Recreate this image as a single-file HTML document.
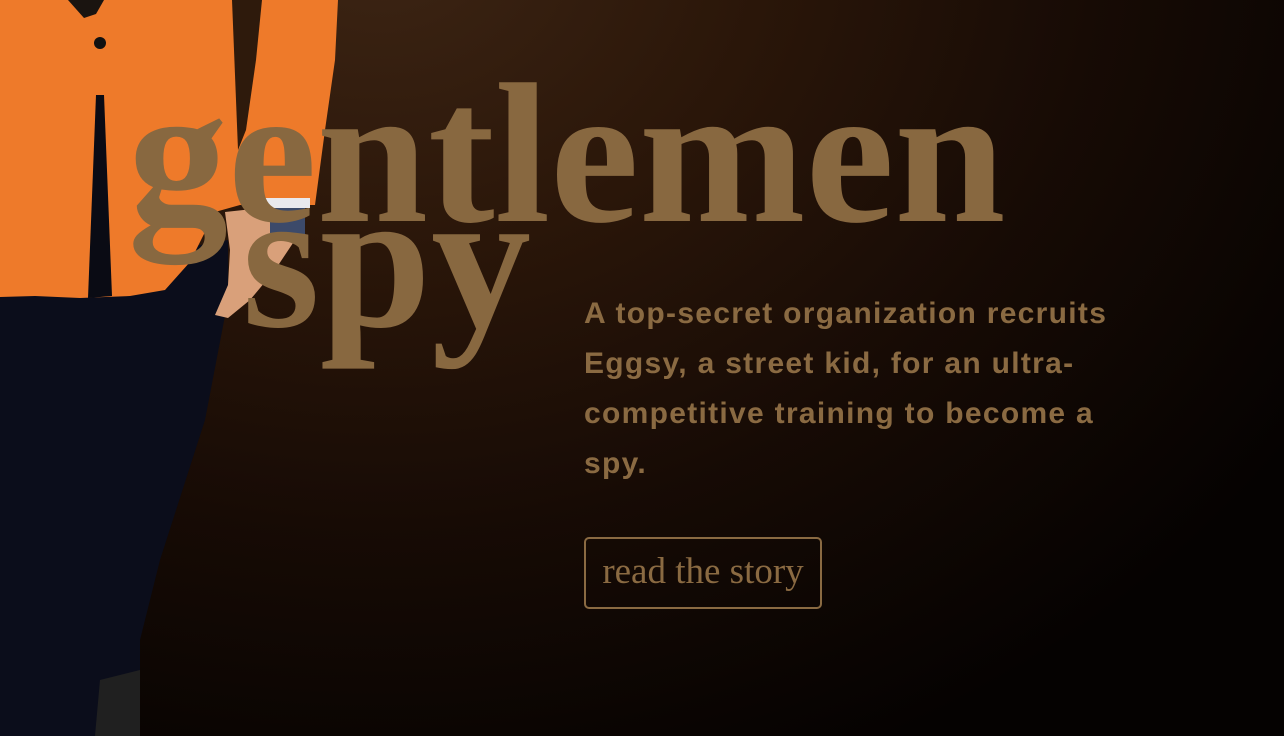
<!DOCTYPE html>
<html><head><style>
html,body{margin:0;padding:0;width:1284px;height:736px;overflow:hidden}
body{background:radial-gradient(ellipse 1100px 900px at 380px -60px,#3d2514 0%,#2a1609 35%,#170b05 65%,#050201 100%);position:relative;font-family:"Liberation Sans",sans-serif}
.h{position:absolute;font-family:"Liberation Serif",serif;font-weight:bold;color:#886840;font-size:200px;letter-spacing:0px;line-height:1;white-space:nowrap}
.p{position:absolute;left:584px;top:289px;width:560px;font-size:30px;font-weight:bold;line-height:50px;color:#8a6a42;letter-spacing:1.3px}
.b{position:absolute;left:584px;top:537px;width:234px;height:68px;border:2px solid #8a6a42;border-radius:5px;color:#8a6a42;font-family:"Liberation Serif",serif;font-size:37px;line-height:66px;text-align:center}
</style></head><body>
<svg width="345" height="736" style="position:absolute;left:0;top:0">
<polygon points="0,280 228,240 228,300 205,420 160,560 140,640 140,736 0,736" fill="#0b0d1b"/>
<path d="M0,0 L338,0 L335,60 L325,130 L315,205 L255,205 L240,205 L215,212 L190,262 L165,290 L130,296 L80,298 L35,296 L0,297 Z" fill="#ee7a2a"/>
<path d="M96,95 L104,95 L112,296 L88,298 Z" fill="#0a0b14"/>
<path d="M232,0 L262,0 L256,60 L246,130 L238,150 Z" fill="#2e1a0c"/>
<polygon points="68,0 104,0 96,14 84,18" fill="#1a1410"/>
<circle cx="100" cy="43" r="6" fill="#111"/>
<path d="M225,212 L290,205 L295,240 L275,270 L250,300 L228,318 L215,315 L228,285 L230,250 Z" fill="#d9a07a"/>
<rect x="255" y="198" width="55" height="10" fill="#e9e9ee"/>
<rect x="270" y="208" width="35" height="28" fill="#3c4a6a"/>
<path d="M100,680 L140,670 L140,736 L95,736 Z" fill="#202020"/>
</svg>
<div class="h" style="left:128px;top:55px">gentlemen</div>
<div class="h" style="left:242px;top:160px">spy</div>
<div class="p">A top-secret organization recruits Eggsy, a street kid, for an ultra-competitive training to become a spy.</div>
<div class="b">read the story</div>
</body></html>
